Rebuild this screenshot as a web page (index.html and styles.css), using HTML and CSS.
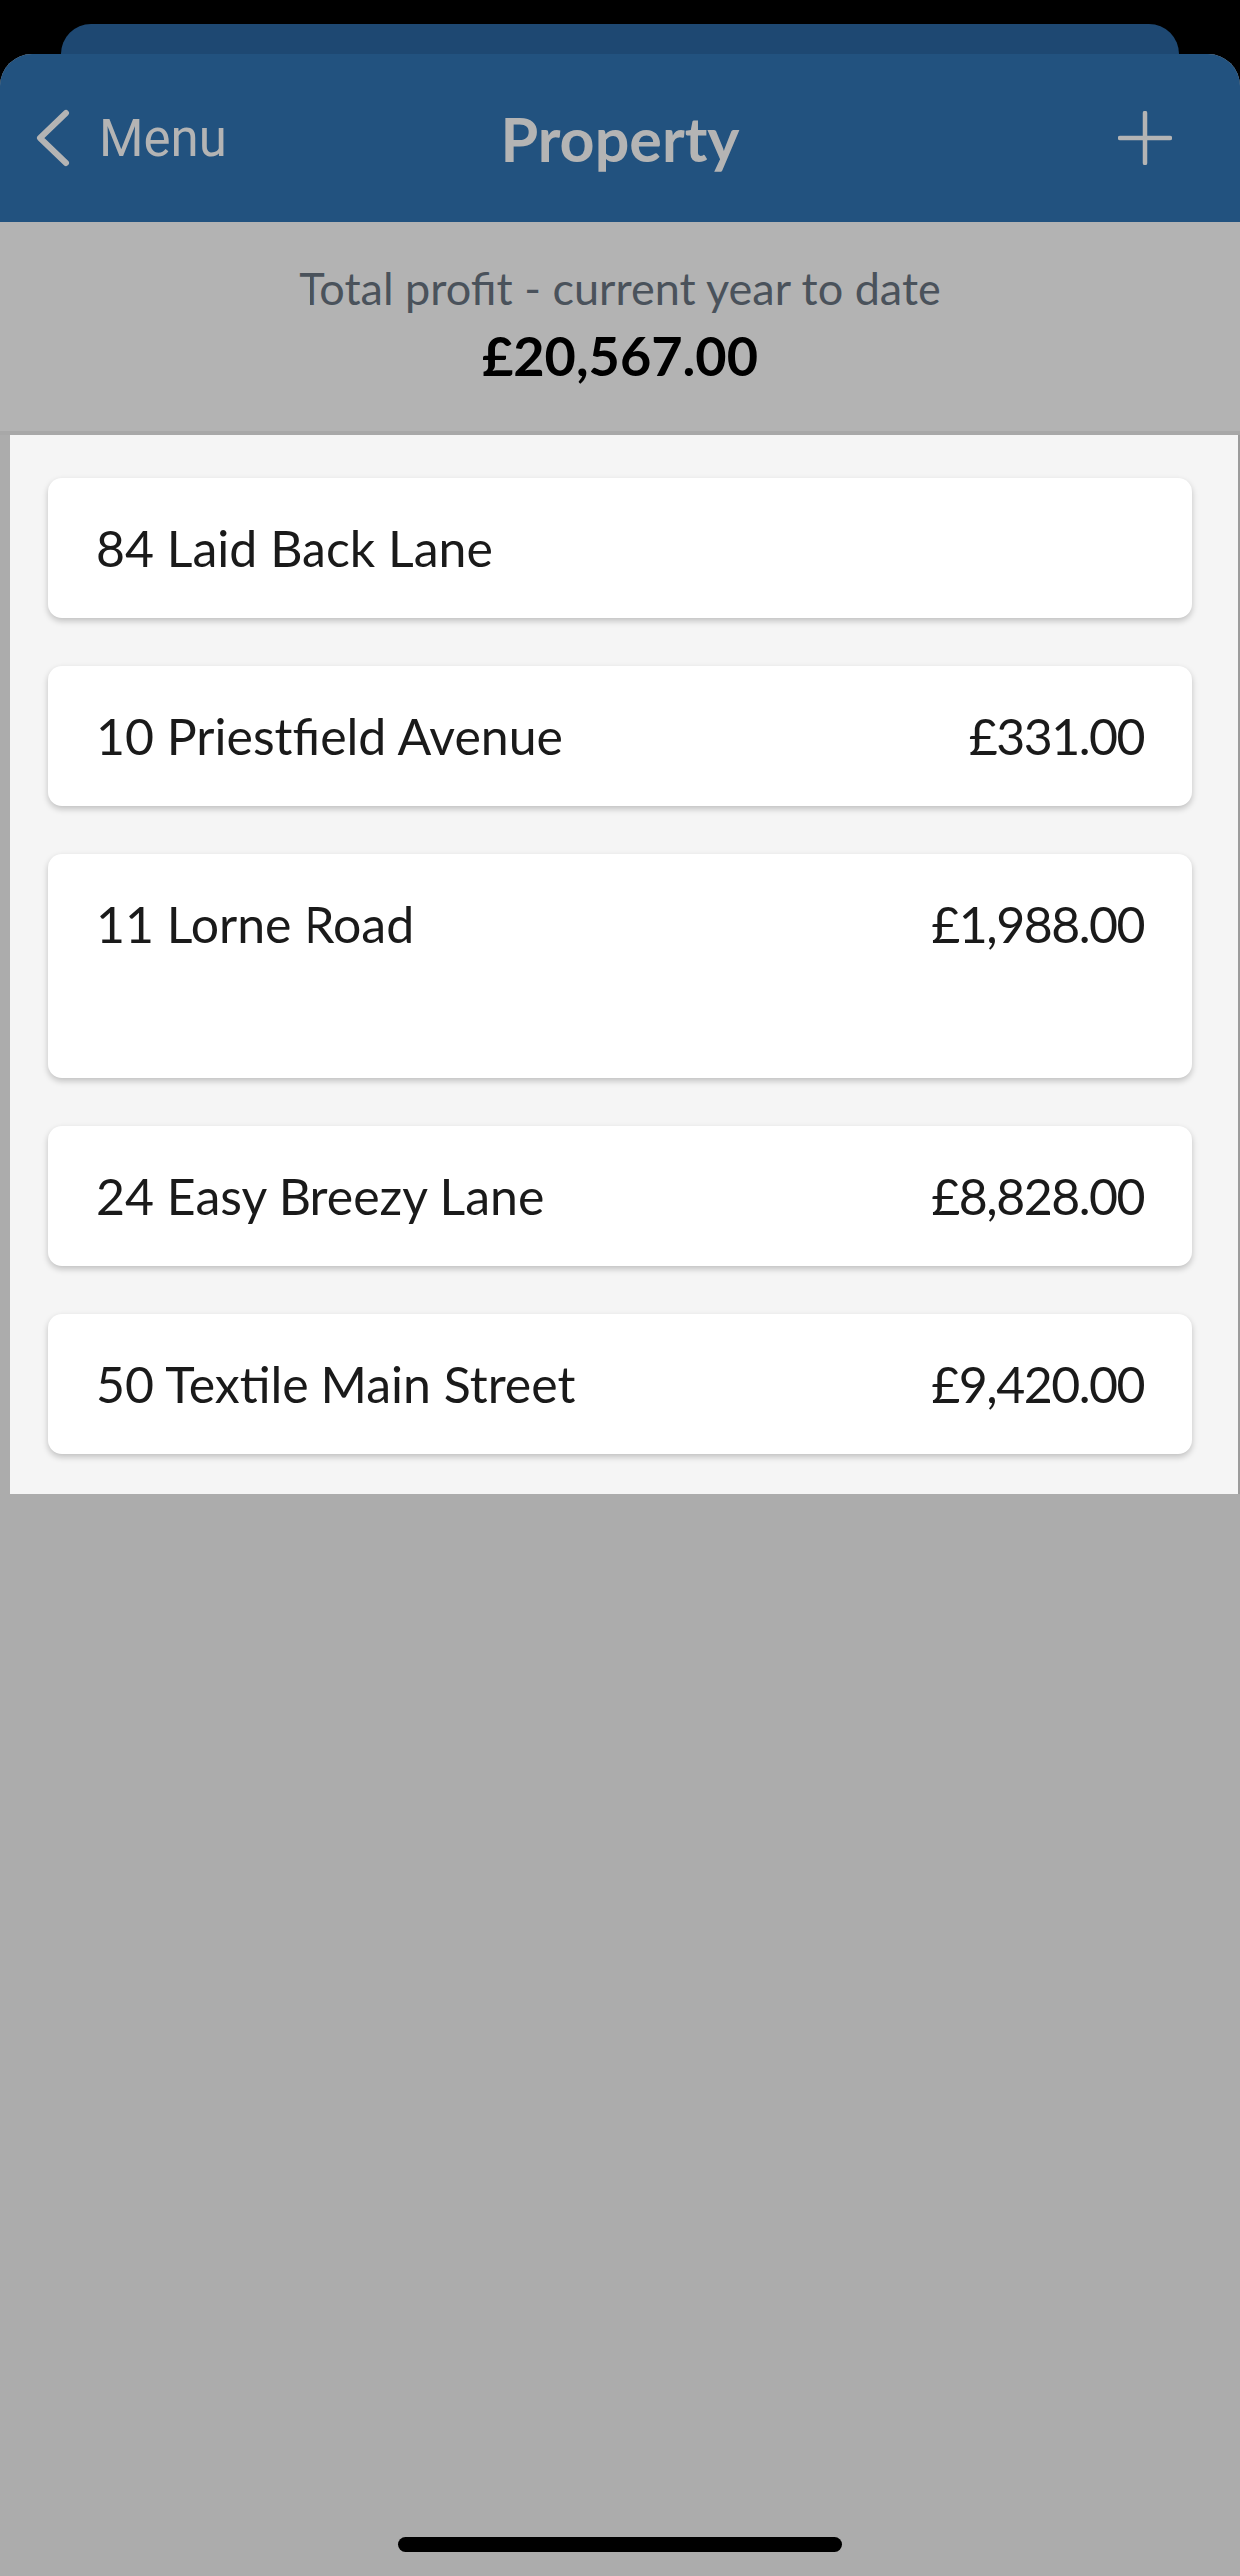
FILE: index.html
```html
<!DOCTYPE html>
<html lang="en">
<head>
    <meta charset="UTF-8">
    <meta name="viewport" content="width=device-width, initial-scale=1.0">
    <title>Property</title>
    <link rel="stylesheet" href="styles.css">
</head>
<body>
    <div class="sheet-back"></div>
    <div class="sheet">
        <header class="navbar">
            <a class="nav-back" href="#">
                <svg class="chevron" width="40" height="58" viewBox="0 0 40 58">
                    <path d="M33 4 L7 29 L33 54" fill="none" stroke="#b4b4b4" stroke-width="6" stroke-linecap="round" stroke-linejoin="round"/>
                </svg>
                <span>Menu</span>
            </a>
            <h1 class="nav-title">Property</h1>
            <a class="nav-add" href="#">
                <svg width="54" height="54" viewBox="0 0 54 54">
                    <path d="M27 2 V52 M2 27 H52" fill="none" stroke="#b4b4b4" stroke-width="4.5" stroke-linecap="round"/>
                </svg>
            </a>
        </header>

        <section class="summary">
            <p class="summary-label">Total profit - current year to date</p>
            <p class="summary-value">£20,567.00</p>
        </section>

        <div class="property-list">
            <div class="card">
                <div class="card-row"><span>84 Laid Back Lane</span><span class="amount"></span></div>
            </div>
            <div class="card">
                <div class="card-row"><span>10 Priestfield Avenue</span><span class="amount">£331.00</span></div>
            </div>
            <div class="card">
                <div class="card-row"><span>11 Lorne Road</span><span class="amount">£1,988.00</span></div>
                <div class="card-extra"></div>
            </div>
            <div class="card">
                <div class="card-row"><span>24 Easy Breezy Lane</span><span class="amount">£8,828.00</span></div>
            </div>
            <div class="card">
                <div class="card-row"><span>50 Textile Main Street</span><span class="amount">£9,420.00</span></div>
            </div>
        </div>

        <div class="spacer"></div>
        <div class="home-indicator"></div>
    </div>
</body>
</html>
```

FILE: styles.css
```css
html, body { margin: 0; padding: 0; }
body {
    background: #000;
    width: 1242px;
    height: 2580px;
    overflow: hidden;
    font-family: Lato, "Open Sans", sans-serif;
}
p, h1 { margin: 0; }
a { text-decoration: none; color: inherit; }

.sheet-back {
    height: 30px;
    margin: 24px 61px 0 61px;
    background: #1e4872;
    border-radius: 30px 30px 0 0;
}

.sheet {
    height: 2526px;
    display: flex;
    flex-direction: column;
    background: #acacac;
    border-radius: 32px 32px 0 0;
    overflow: hidden;
}

.navbar {
    height: 168px;
    flex: none;
    background: #22527f;
    display: grid;
    grid-template-columns: 1fr auto 1fr;
    align-items: center;
    color: #b4b4b4;
}
.nav-back {
    display: flex;
    align-items: center;
    padding-left: 33px;
    font-family: Roboto, Inter, sans-serif;
    font-size: 51px;
    gap: 26px;
    justify-self: start;
}
.chevron { display: block; }
.nav-title {
    font-size: 61px;
    font-weight: 700;
}
.nav-add {
    justify-self: end;
    padding-right: 68px;
    display: flex;
}

.summary {
    flex: none;
    height: 214px;
    background: #b3b3b3;
    border-bottom: 4px solid #a8a8a8;
    text-align: center;
    box-sizing: border-box;
    padding-top: 36px;
}
.summary-label {
    font-size: 45px;
    color: #4a525b;
    line-height: 60px;
}
.summary-value {
    font-size: 54px;
    font-weight: 700;
    color: #000;
    line-height: 70px;
    margin-top: 4px;
}

.property-list {
    flex: none;
    margin-left: 10px;
    background: #f5f5f5;
    border-right: 2px solid #9c9c9c;
    padding: 43px 46px 40px 38px;
    display: flex;
    flex-direction: column;
    gap: 48px;
}
.card {
    background: #fff;
    border-radius: 14px;
    box-shadow: 0 3px 6px rgba(0, 0, 0, 0.22);
    padding: 0 48px;
    color: #1a1a1a;
    font-size: 50px;
}
.card-row {
    height: 140px;
    display: flex;
    align-items: center;
    justify-content: space-between;
}
.amount { letter-spacing: -1.5px; }
.card-extra { height: 85px; }

.spacer { flex: 1; }
.home-indicator {
    flex: none;
    align-self: center;
    width: 444px;
    height: 15px;
    border-radius: 8px;
    background: #000;
    margin-bottom: 24px;
}
```
